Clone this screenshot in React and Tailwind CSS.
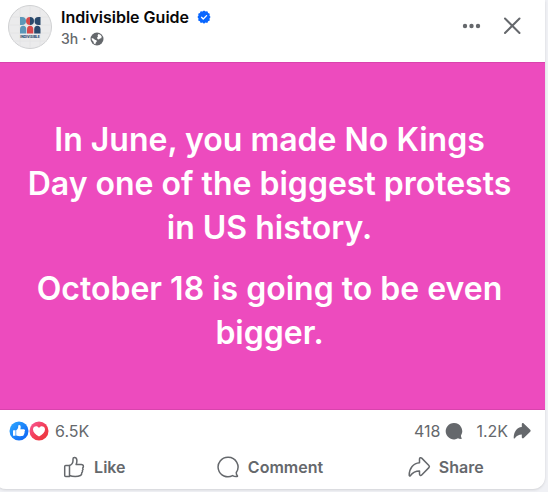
const actions = [
    { label: "Like", Icon: LikeIcon },
    { label: "Comment", Icon: CommentIcon },
    { label: "Share", Icon: ShareIcon },
];

function Avatar() {
    return (
        <svg viewBox="0 0 44 44" className="size-11 shrink-0" aria-hidden="true">
            <circle cx="22" cy="22" r="21.5" fill="#ebebec" stroke="#cfd0d2" />
            <path d="M4 12H40M1 20H43M1 28H43M5 36H39M12 3V41M22 1V43M32 3V41" stroke="#e4e4e5" strokeWidth="1" />
            {/* top row */}
            <path d="M12 12h2a4 4 0 0 1 0 8h-2z" fill="#5c97b8" />
            <path d="M22 12a4 4 0 0 0 0 8z" fill="#d6494c" />
            <path d="M22 12a4 4 0 0 1 0 8z" fill="#29486b" />
            <path d="M32.500 12h-2a4 4 0 0 0 0 8h2z" fill="#29486b" />
            {/* bottom row */}
            <path d="M12 28.500v-4a3 3.500 0 0 1 6.300 0v4z" fill="#5c97b8" />
            <path d="M19 28.500v-4a3 3.500 0 0 1 6.300 0v4z" fill="#d6494c" />
            <path d="M26.200 28.500v-4a3 3.500 0 0 1 6.300 0v4z" fill="#29486b" />
            <text x="22" y="32.500" fontSize="3.3" fontWeight="800" textAnchor="middle" fill="#29486b">INDIVISIBLE</text>
        </svg>
    );
}

function VerifiedBadge() {
    return (
        <svg viewBox="0 0 12 13" className="size-3.5" role="img" aria-label="Verified account">
            <path
                fill="#0866ff"
                d="M6 .5l1.4 1 1.7-.3.7 1.6 1.6.7-.3 1.7 1 1.4-1 1.4.3 1.700-1.600.7-.7 1.600-1.700-.3-1.400 1-1.400-1-1.700.3-.7-1.600-1.600-.7.3-1.700-1-1.400 1-1.400-.3-1.700 1.600-.7.7-1.600 1.700.3z"
            />
            <path d="M3.700 6.800l1.600 1.600 3.100-3.200" fill="none" stroke="#fff" strokeWidth="1.2" strokeLinecap="round" strokeLinejoin="round" />
        </svg>
    );
}

function GlobeIcon() {
    return (
        <svg viewBox="0 0 14 14" className="size-3.5" role="img" aria-label="Public">
            <circle cx="7" cy="7" r="6.5" fill="#65686c" />
            <path fill="#fff" d="M8.400 1.900l2 .9 1.300 1.700-.4 1.700-1.300.2-1.200 1-1.400-.5-.3-1.300.9-1-.4-1.200zM1.700 6l1.700.5 1.500 1.300 1.600.5.3 1.200-1.100 1.200-.3 1.500-1.500-.7-.5-2-1.500-1.500z" />
        </svg>
    );
}

function LikeIcon() {
    return (
        <svg viewBox="0 0 24 24" className="size-6" fill="none" stroke="#65686c" strokeWidth="1.5" strokeLinejoin="round" aria-hidden="true">
            <path d="M7.500 10.500H3.700a1 1 0 0 0-1 1v9a1 1 0 0 0 1 1h3.800z" />
            <path d="M7.500 10.500c2.300-.8 3.500-2.700 3.500-5V3.900c0-.9.6-1.400 1.400-1.400 1.700 0 2.500 1.400 2.500 3.200 0 1.400-.3 2.600-.8 3.800h5.200c1.300 0 2.100.9 2.100 1.900 0 .7-.3 1.200-.8 1.600.5.500.6 1.600-.2 2.500.3.900.1 1.800-.7 2.400.2 1.100-.3 2.100-1.300 2.600-1.400.700-3.200 1-5.200 1-2.300 0-4-.3-5.700-1" />
        </svg>
    );
}

function CommentIcon() {
    return (
        <svg viewBox="0 0 24 24" className="size-6" fill="none" stroke="#65686c" strokeWidth="1.5" strokeLinejoin="round" aria-hidden="true">
            <path d="M12 2.200a9.800 9.800 0 1 0 4.600 18.400c1.400.9 3 1.100 4.500.9.400 0 .5-.4.3-.7-.8-.9-1.200-2-1.100-3.300A9.800 9.800 0 0 0 12 2.200z" />
        </svg>
    );
}

function ShareIcon() {
    return (
        <svg viewBox="0 0 24 24" className="size-6" fill="none" stroke="#65686c" strokeWidth="1.500" strokeLinejoin="round" aria-hidden="true">
            <path d="M12.500 7.700V4c0-1.200 1.300-1.800 2.200-.9l7.200 7.500c.6.600.6 1.400 0 2l-7.200 7.400c-.9.900-2.200.3-2.200-.9v-3.200c-4.200 0-6.700 1.400-9.200 4.800-.4.500-1.100.3-1.100-.4 0-7 4.200-12.200 10.300-12.600z" />
        </svg>
    );
}

function LikeReaction() {
    return (
        <svg viewBox="0 0 20 20" className="size-5" aria-hidden="true">
            <defs>
                <linearGradient id="likeFill" x1="0" y1="0" x2="1" y2="1">
                    <stop stopColor="#2fa9ff" />
                    <stop offset="1" stopColor="#0a60f5" />
                </linearGradient>
            </defs>
            <circle cx="10" cy="10" r="9.500" fill="url(#likeFill)" />
            <path fill="#fff" d="M4.500 9.200h2v5.600h-2a.5.5 0 0 1-.5-.5V9.700a.5.5 0 0 1 .5-.5zM7.200 9.200C8.700 8.400 9.200 7.200 9.200 5.600c0-1 .4-1.500 1-1.500 1 0 1.500.9 1.500 2 0 .8-.2 1.600-.4 2.200h3.200c.9 0 1.500.6 1.500 1.300 0 .5-.2.8-.5 1 .3.500.3 1.100-.2 1.600.1.600 0 1.100-.5 1.400.1.800-.6 1.400-1.500 1.500-2.200.3-4.400.2-6.100-.5z" />
        </svg>
    );
}

function LoveReaction() {
    return (
        <svg viewBox="0 0 20 20" className="size-5" aria-hidden="true">
            <defs>
                <linearGradient id="loveFill" x1="0" y1="0" x2="1" y2="1">
                    <stop stopColor="#f75a9c" />
                    <stop offset=".5" stopColor="#f33e58" />
                    <stop offset="1" stopColor="#ea3434" />
                </linearGradient>
            </defs>
            <circle cx="10" cy="10" r="9.500" fill="url(#loveFill)" />
            <path fill="#fff" d="M10 15.600C6.500 13.600 4 11.200 4 8.500c0-3.300 4.300-4.300 6-1.500 1.700-2.800 6-1.800 6 1.500 0 2.700-2.500 5.100-6 7.100z" />
        </svg>
    );
}

function PostHeader() {
    return (
        <header className="flex items-start pt-[5px] pr-[21px] pb-[13px] pl-3.5">
            <Avatar />
            <div className="ml-[9px]">
                <div className="flex items-center gap-2">
                    <a href="#page" className="text-base leading-6 font-semibold text-[#080809]">Indivisible Guide</a>
                    <VerifiedBadge />
                </div>
                <div className="flex items-center gap-1 text-sm leading-5 font-medium text-[#65686c]">
                    <a href="#post">3h</a>
                    <span>·</span>
                    <GlobeIcon />
                </div>
            </div>
            <div className="ml-auto flex items-center gap-[18px] pt-[9px]">
                <button type="button" aria-label="More options">
                    <svg viewBox="0 0 20 24" className="h-6 w-5" fill="#65686c">
                        <circle cx="3" cy="12" r="2.200" />
                        <circle cx="9.500" cy="12" r="2.200" />
                        <circle cx="16" cy="12" r="2.200" />
                    </svg>
                </button>
                <button type="button" aria-label="Hide post">
                    <svg viewBox="0 0 24 24" className="size-6" fill="none" stroke="#65686c" strokeWidth="2" strokeLinecap="round">
                        <path d="M5 4.500L19.500 19M19.500 4.500L5 19" />
                    </svg>
                </button>
            </div>
        </header>
    );
}

function PostStats() {
    return (
        <div className="flex items-center justify-between pt-[9px] pr-[13px] pl-[15px] text-base leading-6 text-[#65686c]">
            <div className="flex items-center">
                <LikeReaction />
                <LoveReaction />
                <span className="ml-1.5">6.5K</span>
            </div>
            <div className="flex items-center gap-3">
                <span className="flex items-center gap-1">
                    418
                    <svg viewBox="0 0 20 20" className="size-5" fill="#65686c" role="img" aria-label="comments">
                        <path d="M10 2a8.200 8.200 0 1 0 4 15.300c1 .6 2.300.7 3.600.5.300 0 .4-.3.200-.6-.6-.8-.9-1.700-.8-2.700A8.200 8.200 0 0 0 10 2z" />
                    </svg>
                </span>
                <span className="flex items-center gap-1">
                    1.2K
                    <svg viewBox="0 0 20 20" className="size-5" fill="#65686c" role="img" aria-label="shares">
                        <path d="M9.800 6V3.200c0-1 1.200-1.500 1.900-.8l6.500 6.400c.6.600.6 1.300 0 1.900l-6.500 6.400c-.7.700-1.900.2-1.900-.8v-2.700c-3 0-5 1.200-7 3.700-.4.500-1.100.3-1.100-.4C1.700 10.900 4.700 6.500 9.800 6z" />
                    </svg>
                </span>
            </div>
        </div>
    );
}

export default function App() {
    return (
        <main className="min-h-screen overflow-hidden bg-[#f0f1f5] pr-[3px] font-['Inter',sans-serif]">
            <article className="-ml-1.5 overflow-hidden rounded-b-xl bg-white shadow-sm">
                <PostHeader />
                <div className="space-y-[17px] border-y border-[#d943ad] bg-[#ed4bbe] px-8 pt-[55px] pb-[54px] text-center text-[32px] leading-[44px] font-semibold text-white">
                    <p>In June, you made No Kings Day one of the biggest protests in US history.</p>
                    <p>October 18 is going to be even bigger.</p>
                </div>
                <PostStats />
                <div className="grid grid-cols-3 px-3 pt-1 pb-0.5">
                    {actions.map(({ label, Icon }) => (
                        <button key={label} type="button" className="flex h-10 items-center justify-center gap-2 text-base font-semibold text-[#65686c]">
                            <Icon />
                            {label}
                        </button>
                    ))}
                </div>
            </article>
        </main>
    );
}
